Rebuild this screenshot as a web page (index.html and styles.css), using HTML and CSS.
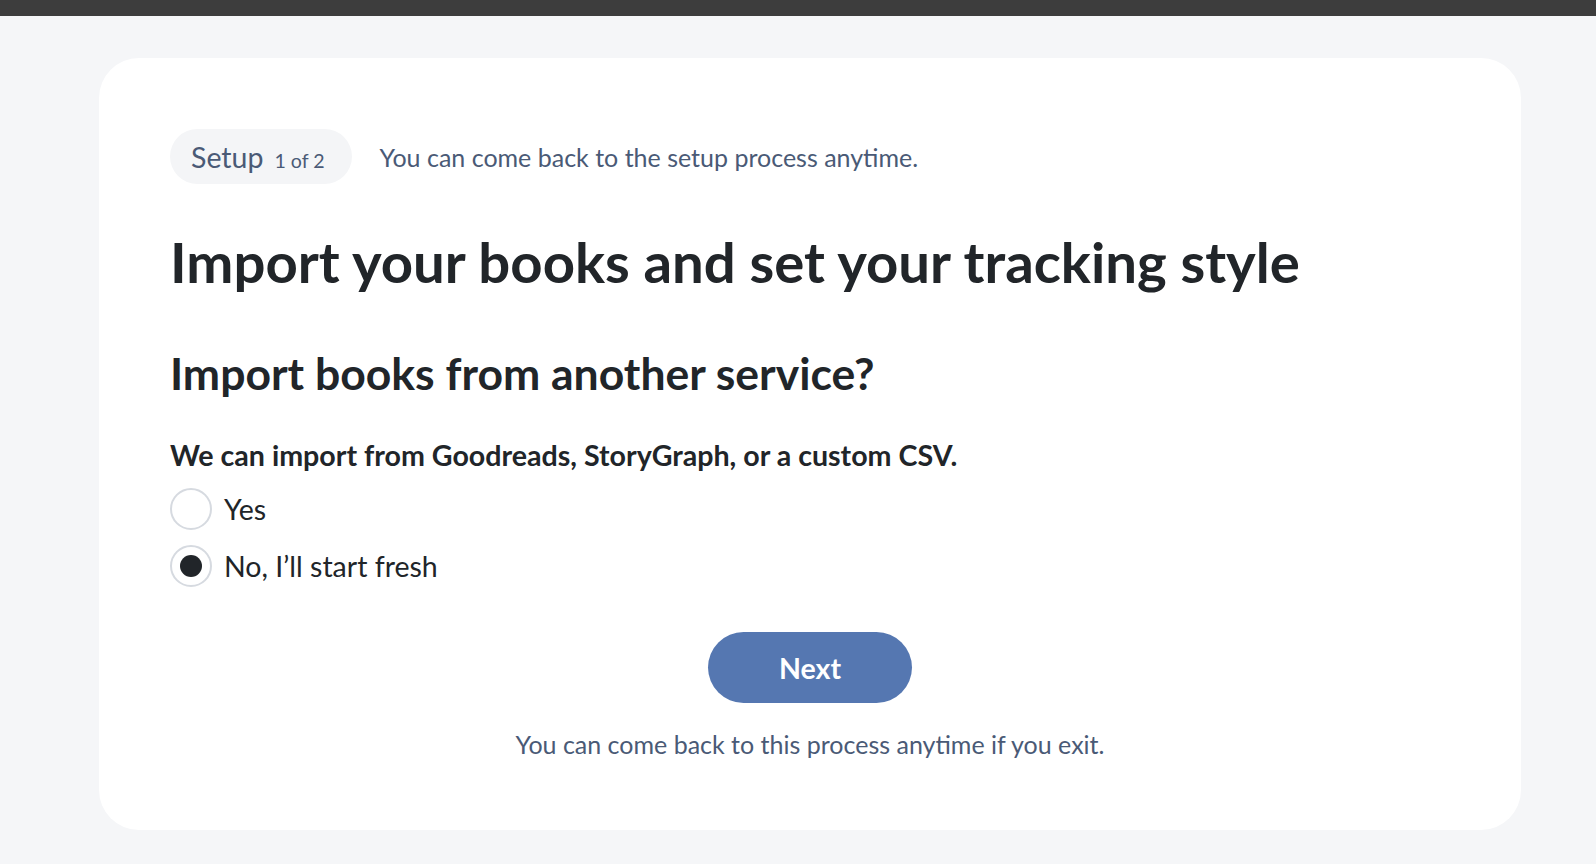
FILE: index.html
```html
<!DOCTYPE html>
<html lang="en">
<head>
<meta charset="utf-8">
<title>Setup</title>
<link rel="stylesheet" href="styles.css">
</head>
<body>
<div class="topbar"></div>
<main class="page">
  <section class="card">
    <div class="step-row">
      <span class="pill"><span class="pill-title">Setup</span><span class="pill-count">1 of 2</span></span>
      <span class="step-note">You can come back to the setup process anytime.</span>
    </div>
    <h1 class="title">Import your books and set your tracking style</h1>
    <h2 class="subtitle">Import books from another service?</h2>
    <p class="question">We can import from Goodreads, StoryGraph, or a custom CSV.</p>
    <div class="options">
      <label class="option"><span class="radio"></span><span class="option-text">Yes</span></label>
      <label class="option"><span class="radio checked"></span><span class="option-text">No, I’ll start fresh</span></label>
    </div>
    <div class="actions">
      <button class="next" type="button">Next</button>
      <p class="footnote">You can come back to this process anytime if you exit.</p>
    </div>
  </section>
</main>
</body>
</html>
```
FILE: styles.css
```css
* { box-sizing: border-box; }
html, body {
  margin: 0;
  padding: 0;
}
body {
  background: #f5f6f8;
  font-family: Lato, "Open Sans", "Liberation Sans", sans-serif;
  color: #212529;
  height: 864px;
  overflow: hidden;
}
.topbar {
  height: 16px;
  background: #3d3d3d;
}
.page {
  padding: 42px 75px 0 99px;
}
.card {
  background: #ffffff;
  border-radius: 40px;
  padding: 71px;
}
.step-row {
  display: flex;
  align-items: center;
  gap: 28px;
}
.pill {
  display: inline-flex;
  align-items: baseline;
  gap: 11px;
  height: 55px;
  padding: 11px 27px 0 21px;
  border-radius: 28px;
  background: #f4f5f7;
  color: #4a5a76;
}
.pill-title {
  font-size: 28.5px;
  line-height: 1.2;
}
.pill-count {
  font-size: 19.6px;
  line-height: 1.2;
}
.step-note {
  font-size: 25px;
  line-height: 1.2;
  color: #4a5a76;
}
.title {
  margin: 44px 0 0;
  font-size: 56.3px;
  line-height: 1.2;
  font-weight: 700;
  color: #212529;
}
.subtitle {
  margin: 50px 0 0;
  font-size: 44.5px;
  line-height: 1.2;
  font-weight: 700;
  color: #212529;
}
.question {
  margin: 39px 0 0;
  font-size: 28.6px;
  line-height: 1.2;
  font-weight: 700;
  color: #212529;
}
.options {
  margin-top: 16px;
  display: flex;
  flex-direction: column;
  gap: 15px;
}
.option {
  display: flex;
  align-items: center;
  gap: 12px;
  font-size: 28.5px;
  line-height: 1.2;
  color: #212529;
}
.radio {
  width: 42px;
  height: 42px;
  border-radius: 50%;
  border: 2px solid #d6dae0;
  background: #fff;
  display: flex;
  align-items: center;
  justify-content: center;
  flex: none;
}
.radio.checked::after {
  content: "";
  width: 22px;
  height: 22px;
  border-radius: 50%;
  background: #212529;
}
.actions {
  display: flex;
  flex-direction: column;
  align-items: center;
  margin-top: 45px;
}
.next {
  width: 204px;
  height: 71px;
  border: none;
  border-radius: 36px;
  background: #5577b1;
  color: #ffffff;
  font-family: inherit;
  font-size: 28.5px;
  font-weight: 700;
}
.footnote {
  margin: 26px 0 0;
  font-size: 25px;
  line-height: 1.2;
  color: #4a5a76;
}
```
